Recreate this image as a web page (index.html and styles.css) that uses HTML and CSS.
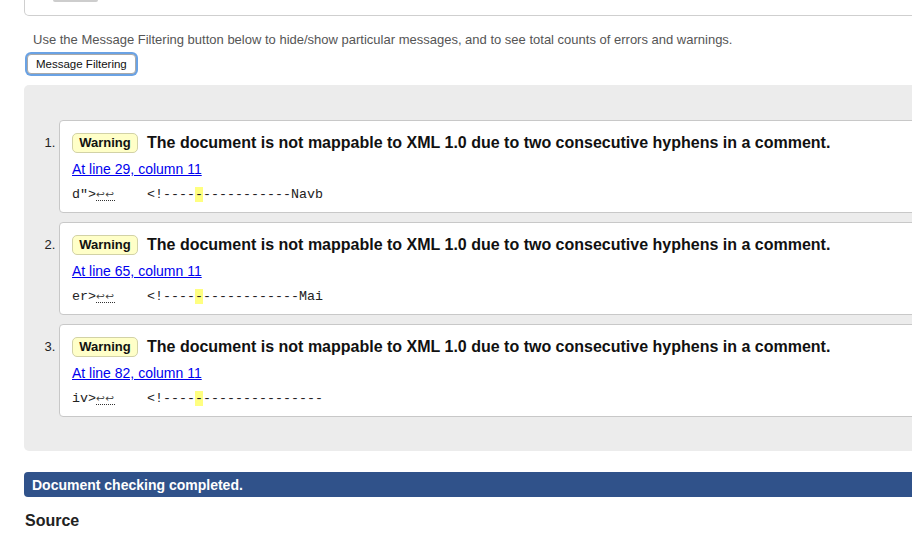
FILE: index.html
```html
<!DOCTYPE html>
<html>
<head>
<meta charset="utf-8">
<link rel="stylesheet" href="styles.css">
</head>
<body>
<div class="page">
  <div class="topbox"><div class="topbtn"></div></div>
  <p class="intro">Use the Message Filtering button below to hide/show particular messages, and to see total counts of errors and warnings.</p>
  <button class="filter">Message Filtering</button>
  <div class="results">
    <ol class="msgs">
      <li>
        <div class="card">
          <p class="title"><span class="badge">Warning</span><span class="msg">The document is not mappable to XML 1.0 due to two consecutive hyphens in a comment.</span></p>
          <p class="loc"><a href="#">At line 29, column 11</a></p>
          <p class="extract"><code>d"&gt;<span class="lf">↩↩</span>    &lt;!----<b class="hl">-</b>-----------Navb</code></p>
        </div>
      </li>
      <li>
        <div class="card">
          <p class="title"><span class="badge">Warning</span><span class="msg">The document is not mappable to XML 1.0 due to two consecutive hyphens in a comment.</span></p>
          <p class="loc"><a href="#">At line 65, column 11</a></p>
          <p class="extract"><code>er&gt;<span class="lf">↩↩</span>    &lt;!----<b class="hl">-</b>------------Mai</code></p>
        </div>
      </li>
      <li>
        <div class="card">
          <p class="title"><span class="badge">Warning</span><span class="msg">The document is not mappable to XML 1.0 due to two consecutive hyphens in a comment.</span></p>
          <p class="loc"><a href="#">At line 82, column 11</a></p>
          <p class="extract"><code>iv&gt;<span class="lf">↩↩</span>    &lt;!----<b class="hl">-</b>---------------</code></p>
        </div>
      </li>
    </ol>
  </div>
  <p class="done">Document checking completed.</p>
  <h2 class="source">Source</h2>
</div>
</body>
</html>
```
FILE: styles.css
```css
html, body {
  margin: 0;
  padding: 0;
  overflow: hidden;
  background: #fff;
}
body {
  font-family: "Liberation Sans", Arial, Helvetica, sans-serif;
  color: #111;
  width: 912px;
  height: 546px;
}
.page {
  margin-left: 24px;
  width: 960px;
}
.topbox {
  height: 15px;
  border: 1px solid #cfcfcf;
  border-top: none;
  border-radius: 0 0 5px 5px;
}
.topbtn {
  margin-left: 28px;
  width: 45px;
  height: 2px;
  background: #cdcdcd;
  border-radius: 0 0 3px 3px;
}
.intro {
  margin: 16px 0 0 9px;
  font-size: 13px;
  line-height: 16px;
  color: #555;
}
.filter {
  display: block;
  margin: 6px 0 0 3px;
  padding: 1px 8px 2px;
  height: 20px;
  font-family: "Liberation Sans", Arial, sans-serif;
  font-size: 11.5px;
  color: #111;
  background: #fff;
  border: 1px solid #a9a9a9;
  border-radius: 4px;
  box-shadow: 0 0 0 2px #6aa2e4;
}
.results {
  margin-top: 11px;
  background: #ececec;
  border-radius: 5px;
  padding: 35px 0 34px 0;
}
.msgs {
  margin: 0;
  padding: 0 0 0 35px;
  display: flex;
  flex-direction: column;
  gap: 9px;
  font-size: 13px;
  color: #222;
}
.msgs li::marker {
  font-size: 13px;
}
.card {
  background: #fff;
  border: 1px solid #c8c8c8;
  border-radius: 4px;
  padding: 12px 12px 0 12px;
  height: 79px;
}
.title {
  margin: 0;
  display: flex;
  align-items: center;
  gap: 9px;
  height: 20px;
}
.badge {
  display: inline-block;
  box-sizing: border-box;
  height: 20px;
  width: 66px;
  text-align: center;
  line-height: 18px;
  font-size: 13px;
  font-weight: bold;
  color: #111;
  background: #ffffc8;
  border: 1px solid #d2d2a6;
  border-radius: 5px;
}
.msg {
  font-size: 16px;
  font-weight: bold;
  color: #111;
  white-space: nowrap;
}
.loc {
  margin: 8px 0 0 0;
  font-size: 14px;
  line-height: 16px;
}
.loc a {
  color: #0000ee;
  text-decoration: underline;
}
.extract {
  margin: 9px 0 0 0;
  line-height: 16px;
}
.extract code {
  font-family: "Liberation Mono", "Courier New", monospace;
  font-size: 13.33px;
  white-space: pre;
  color: #222;
}
.lf {
  display: inline-block;
  width: 19px;
  font-family: "DejaVu Sans", sans-serif;
  font-size: 10.5px;
  line-height: 12px;
  letter-spacing: 0.5px;
  color: #444;
  border-bottom: 1px dotted #333;
}
.hl {
  font-weight: normal;
  background: #ffff80;
}
.done {
  margin: 21px 0 0 0;
  height: 25px;
  line-height: 26px;
  background: #30528a;
  color: #fff;
  font-size: 14px;
  font-weight: bold;
  padding-left: 8px;
  border-radius: 4px;
}
.source {
  margin: 15px 0 0 1px;
  font-size: 16px;
  font-weight: bold;
  color: #222;
}
```
